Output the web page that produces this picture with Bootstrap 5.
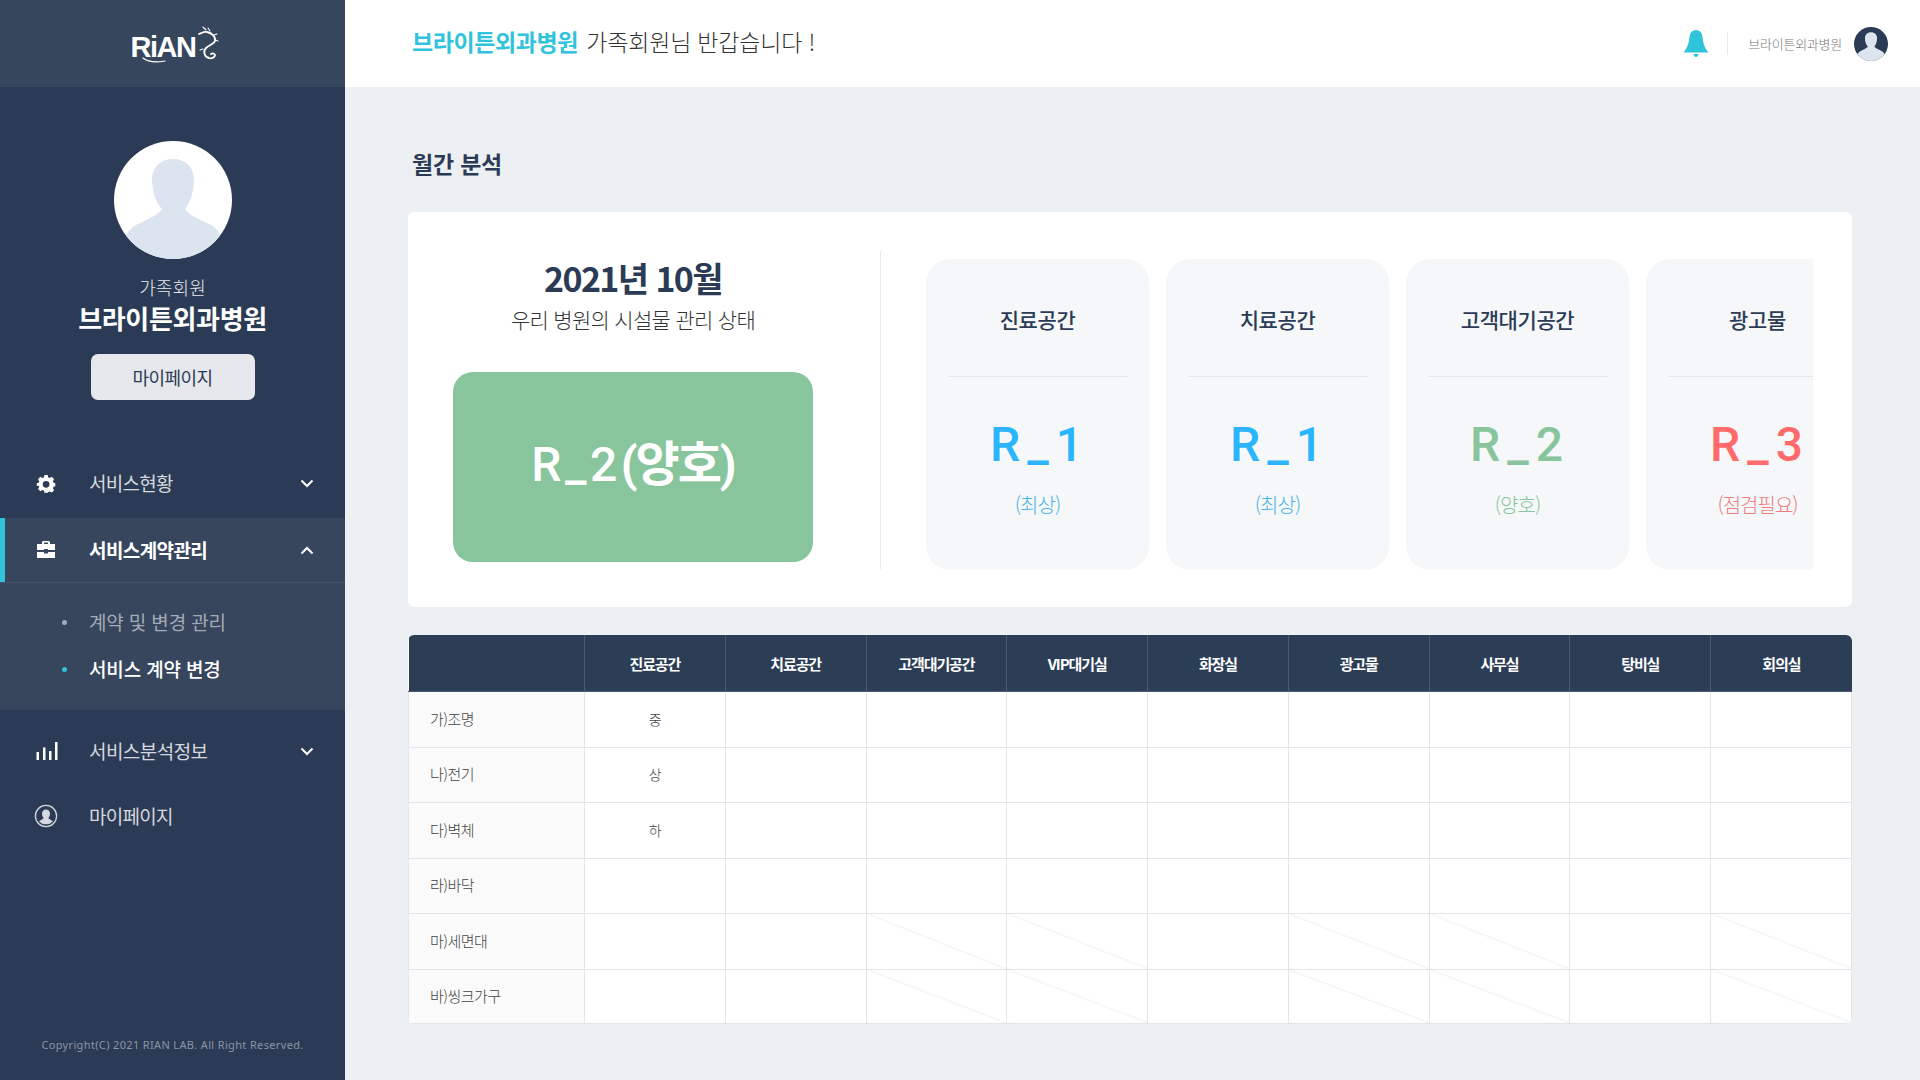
<!doctype html>
<html lang="ko"><head><meta charset="utf-8"><title>RIAN</title>
<link href="https://cdn.jsdelivr.net/npm/bootstrap@5.3.0/dist/css/bootstrap.min.css" rel="stylesheet">
<style>
html,body{height:100%;overflow:hidden}
body{font-family:"Noto Sans CJK KR","Noto Sans",sans-serif;background:#ecf0f3;color:#2c3b55}
.shell{height:1080px}
.side{width:345px;flex:0 0 345px;background:#2c3b55;color:#fff}
.brand{height:87px;background:#36465c;padding-top:2px}
.logo-wrap{position:relative;width:88px;height:40px;margin-left:4px}
.logo-word{font-family:"Liberation Sans",sans-serif;font-weight:700;font-size:29px;letter-spacing:-1.500px;line-height:40px;color:#fff;padding-top:2px;display:block}
.logo-swirl{position:absolute;left:0;top:0}
.prof{padding-top:54px}
.avatar-big{width:118px;height:118px;display:block}
.prof-role{font-size:18px;font-weight:300;letter-spacing:.1px;color:#e6e9ee;line-height:24px;margin-top:16px}
.prof-name{font-size:26px;font-weight:700;letter-spacing:-.35px;line-height:32px;margin-top:3px}
.prof-btn{width:164px;height:46px;background:#e6e8ed;border:0;border-radius:7px;font-size:18px;font-weight:400;letter-spacing:-.6px;color:#2c3b55;margin-top:20px;padding:0}
.menu{margin-top:51px}
.menu-row{height:66px;padding-left:34px;padding-right:31px;color:#d5d8de;font-size:19px;letter-spacing:-.7px;text-decoration:none}
.first-row{height:67px;padding-bottom:2px}
.menu-row.on{background:#37465d;color:#fff;font-weight:700;box-shadow:inset 5px 0 0 #2fc4dc;border-bottom:1px solid #445269;height:65px;letter-spacing:-.6px}
.ico{width:24px;height:24px;margin-right:31px;flex:none}
.chev{width:14px;height:9px;margin-left:auto;flex:none}
.sub-menu{background:#37465d;height:127px;padding-top:16px}
.sub-item{height:47px;padding-left:62px;font-size:19px;letter-spacing:-.15px;color:#a4abb7}
.sub-item.on{color:#fff;font-weight:500}
.dot{width:5px;height:5px;border-radius:50%;background:#a4abb7;margin-right:22px;flex:none}
.sub-item.on .dot{background:#2fc4dc}
.after-sub{margin-top:9px;height:64px;letter-spacing:-.55px}
.last-row{height:64px;margin-top:1px}
.copy{font-family:"Noto Sans",sans-serif;font-size:11px;color:#8a94a5;margin-top:auto;padding-bottom:27px;letter-spacing:.35px}
.main-col{flex:0 0 1575px;width:1575px}
.topbar{height:87px;background:#fff;padding:0 32px 0 67px}
.hello{font-size:23px;font-weight:300;letter-spacing:-.2px;color:#333;padding-bottom:5px}
.hello b{color:#2fc4dc;font-weight:700;letter-spacing:-.4px;margin-right:2px}
.vr-line{width:1px;height:23px;background:#e6e8eb;margin:0 20px 0 18px}
.top-name{font-size:13px;font-weight:300;letter-spacing:-.25px;color:#777;margin-right:12px}
.work{padding:0 68px 0 63px}
.page-title{font-size:23px;font-weight:700;letter-spacing:-.2px;margin:60px 0 0 4px;line-height:32px;height:65px}
.panel{background:#fff;border-radius:6px;padding:39px 39px 38px 45px;height:395px}
.sum{width:428px;flex:none;border-right:1px solid #e6e8eb;padding-right:67px;margin-right:45px}
.sum-date{font-size:34px;font-weight:700;letter-spacing:-1.6px;line-height:46px;margin-top:4px}
.sum-sub{font-size:21px;font-weight:300;letter-spacing:-.7px;line-height:30px;color:#333;margin-top:3px}
.grade-box{height:190px;background:#88c59c;border-radius:20px;color:#fff;font-family:Roboto,"Noto Sans CJK KR",sans-serif;font-size:48px;font-weight:500;margin-top:38px;padding-bottom:4px;white-space:pre}
.grade-code{letter-spacing:3.500px}
.grade-word{font-weight:700;letter-spacing:-2px}
.scroller{overflow:hidden;flex:1;padding-top:8px;height:319px;gap:17px}
.tile{flex:0 0 223px;height:311px;background:#f5f7f9;border-radius:24px;padding:0 22px;text-align:center}
.tile-name{height:118px;border-bottom:1px solid #e3e6e9;font-size:21px;font-weight:500;letter-spacing:-.4px;padding-top:44px;line-height:32px;color:#2c3b55}
.tile-val{font-family:Roboto,sans-serif;font-size:48px;font-weight:500;letter-spacing:7px;text-indent:5px;line-height:60px;margin-top:38px;white-space:nowrap}
.tile-sub{font-size:20px;font-weight:300;letter-spacing:-1px;line-height:30px;margin-top:15px;white-space:nowrap}
.c-blue{color:#2cb5ff}.c-green{color:#88c59c}.c-red{color:#ff6b6b}
.sub-blue{color:#4db4e6}.sub-red{color:#ee7d7d}
.grid-wrap{margin-top:28px;border-radius:6px;overflow:hidden;background:#fff}
.grid{table-layout:fixed;width:100%;margin:0;border-collapse:collapse}
.grid th{background:#2c3d56;color:#fff;height:56px;font-size:15px;font-weight:700;letter-spacing:-1.1px;text-align:center;vertical-align:middle;border:1px solid #4b5a70;border-top:0;padding:3px 0 0}
.grid th:first-child{border-left:0}.grid th:last-child{border-right:0}
.grid td{height:55px;border:1px solid #e3e5e8;padding:0;text-align:center;vertical-align:middle;font-size:14px;font-weight:300;color:#444;letter-spacing:-.5px;background:#fff}
.grid tr:nth-child(odd) td{height:56px}
.grid tbody tr:last-child td{height:54px}
.grid td:first-child{background:#fafafa;text-align:left;padding-left:21px;font-size:15px}
.grid td.x{background:linear-gradient(to top right,transparent calc(50% - .6px),#e4e6e9,transparent calc(50% + .6px))}
</style></head><body>
<div class="shell d-flex">
<aside class="side d-flex flex-column">
  <div class="brand d-flex align-items-center justify-content-center">
    <div class="logo-wrap">
      <span class="logo-word">RiAN</span>
      <svg class="logo-swirl" width="88" height="40" viewBox="0 0 88 40" fill="none" stroke="#fff" stroke-linecap="round">
        <path stroke-width="1.800" d="M68 9c3-1 5-3 8-2 5 1 9 5 8 9-1 3-6 4-9 7-3 3-2 9 3 10 3 1 6-1 6-3-1-2-3-2-4-1"/>
        <path stroke-width="1.100" d="M72 2l3 3M77 3l2 3M83 10l3-1M84 15l3 1M72 24l-3 1"/>
        <path stroke-width="1.200" d="M12 33c5 4 12 5 22 3"/>
      </svg>
    </div>
  </div>
  <div class="prof d-flex flex-column align-items-center">
    <svg class="avatar-big" viewBox="0 0 118 118"><defs><clipPath id="ca"><circle cx="59" cy="59" r="59"/></clipPath></defs><circle cx="59" cy="59" r="59" fill="#fff"/><path clip-path="url(#ca)" fill="#dce5ef" d="M38 38C38 26 47 18 59 18s21 8 21 20c0 13-4 24-9 30 2 4 14 11 24 15 5 2 9 6 11 11v24H12V94c3-5 7-9 12-11 10-4 22-11 24-15-6-6-10-17-10-30z"/></svg>
    <div class="prof-role">가족회원</div>
    <div class="prof-name">브라이튼외과병원</div>
    <button class="prof-btn" type="button">마이페이지</button>
  </div>
  <nav class="menu">
    <a class="menu-row first-row d-flex align-items-center" href="#">
      <svg class="ico" viewBox="0 0 24 24" fill="#fff"><path fill-rule="evenodd" d="M10 2h4l.6 2.8 1.8.8 2.4-1.5 2.8 2.8-1.5 2.4.8 1.8L23 11.6v3.8l-2.100.6-.8 1.8 1.500 2.400-2.800 2.600-2.400-1.400-1.800.700L14 23h-4l-.6-2.500-1.800-.7-2.400 1.400-2.800-2.600 1.500-2.400-.8-1.800L1 15.400v-3.800l2.100-.5.8-1.800-1.500-2.400 2.800-2.800 2.400 1.500 1.800-.8zM12 9a4 4 0 1 0 0 8 4 4 0 0 0 0-8z" transform="translate(2 1.400) scale(.84)"/></svg>
      <span>서비스현황</span>
      <svg class="chev" viewBox="0 0 14 9" fill="none" stroke="#fff" stroke-width="2"><path d="M1.500 1.500L7 7l5.500-5.500"/></svg>
    </a>
    <a class="menu-row on d-flex align-items-center" href="#">
      <svg class="ico" viewBox="0 0 24 24" fill="#fff"><path d="M9 3h6l1 1v2h5v6h-7v-1h-4v1H3V6h5V4zm1 1.500V6h4V4.500zM3 14h7v1.500h4V14h7v6H3z"/></svg>
      <span>서비스계약관리</span>
      <svg class="chev" viewBox="0 0 14 9" fill="none" stroke="#fff" stroke-width="2"><path d="M1.500 7.500L7 2l5.500 5.500"/></svg>
    </a>
    <div class="sub-menu">
      <div class="sub-item d-flex align-items-center"><i class="dot"></i>계약 및 변경 관리</div>
      <div class="sub-item on d-flex align-items-center"><i class="dot"></i>서비스 계약 변경</div>
    </div>
    <a class="menu-row after-sub d-flex align-items-center" href="#">
      <svg class="ico" viewBox="0 0 24 24" fill="#fff"><path d="M2.500 13h2.500v8H2.500zM9 8.500h2.500V21H9zM15 12h2.500v9H15zM21 3h2.500v18H21z"/></svg>
      <span>서비스분석정보</span>
      <svg class="chev" viewBox="0 0 14 9" fill="none" stroke="#fff" stroke-width="2"><path d="M1.500 1.500L7 7l5.500-5.500"/></svg>
    </a>
    <a class="menu-row last-row d-flex align-items-center" href="#">
      <svg class="ico" viewBox="0 0 24 24"><circle cx="12" cy="12" r="10.600" fill="none" stroke="#d5d8de" stroke-width="1.300"/><path fill="#d5d8de" d="M12 5.500c2.500 0 4 1.700 4 4 0 2-.8 3.500-1.700 4.500.4 1 3 1.800 4.700 3.500a10 10 0 0 1-14 0c1.700-1.700 4.300-2.500 4.700-3.500C8.800 13 8 11.500 8 9.500c0-2.300 1.500-4 4-4z"/></svg>
      <span>마이페이지</span>
    </a>
  </nav>
  <div class="copy text-center">Copyright(C) 2021 RIAN LAB. All Right Reserved.</div>
</aside>
<div class="main-col d-flex flex-column">
  <header class="topbar d-flex align-items-center">
    <div class="hello"><b>브라이튼외과병원</b> 가족회원님 반갑습니다 !</div>
    <div class="ms-auto d-flex align-items-center">
      <svg width="26" height="30" viewBox="0 0 26 30" fill="#2fc4dc"><path d="M13 1c4 0 6 3 6.500 7 .5 5 1.500 10 6 15.500H.5C5 18 6 13 6.500 8 7 4 9 1 13 1z"/><path d="M10.500 25h5c0 1.500-1 3-2.500 3s-2.500-1.500-2.500-3z"/></svg>
      <span class="vr-line"></span>
      <span class="top-name">브라이튼외과병원</span>
      <svg width="34" height="34" viewBox="0 0 118 118"><defs><clipPath id="cb"><circle cx="59" cy="59" r="59"/></clipPath></defs><circle cx="59" cy="59" r="59" fill="#2c3b55"/><path clip-path="url(#cb)" fill="#dce5ef" d="M38 38C38 26 47 18 59 18s21 8 21 20c0 13-4 24-9 30 2 4 14 11 24 15 5 2 9 6 11 11v24H12V94c3-5 7-9 12-11 10-4 22-11 24-15-6-6-10-17-10-30z"/></svg>
    </div>
  </header>
  <main class="work">
    <h1 class="page-title">월간 분석</h1>
    <section class="panel d-flex">
      <div class="sum text-center">
        <div class="sum-date">2021년 10월</div>
        <div class="sum-sub">우리 병원의 시설물 관리 상태</div>
        <div class="grade-box d-flex align-items-center justify-content-center"><span class="grade-code">R_2</span> <span class="grade-word">(양호)</span></div>
      </div>
      <div class="scroller d-flex">
        <div class="tile"><div class="tile-name">진료공간</div><div class="tile-val c-blue">R_1</div><div class="tile-sub sub-blue">(최상)</div></div>
        <div class="tile"><div class="tile-name">치료공간</div><div class="tile-val c-blue">R_1</div><div class="tile-sub sub-blue">(최상)</div></div>
        <div class="tile"><div class="tile-name">고객대기공간</div><div class="tile-val c-green">R_2</div><div class="tile-sub c-green">(양호)</div></div>
        <div class="tile"><div class="tile-name">광고물</div><div class="tile-val c-red">R_3</div><div class="tile-sub sub-red">(점검필요)</div></div>
      </div>
    </section>
    <div class="grid-wrap">
      <table class="grid">
        <colgroup><col style="width:176px"><col span="9"></colgroup>
        <thead><tr><th></th><th>진료공간</th><th>치료공간</th><th>고객대기공간</th><th>VIP대기실</th><th>화장실</th><th>광고물</th><th>사무실</th><th>탕비실</th><th>회의실</th></tr></thead>
        <tbody>
          <tr><td>가)조명</td><td>중</td><td></td><td></td><td></td><td></td><td></td><td></td><td></td><td></td></tr>
          <tr><td>나)전기</td><td>상</td><td></td><td></td><td></td><td></td><td></td><td></td><td></td><td></td></tr>
          <tr><td>다)벽체</td><td>하</td><td></td><td></td><td></td><td></td><td></td><td></td><td></td><td></td></tr>
          <tr><td>라)바닥</td><td></td><td></td><td></td><td></td><td></td><td></td><td></td><td></td><td></td></tr>
          <tr><td>마)세면대</td><td></td><td></td><td class="x"></td><td class="x"></td><td></td><td class="x"></td><td class="x"></td><td></td><td class="x"></td></tr>
          <tr><td>바)씽크가구</td><td></td><td></td><td class="x"></td><td class="x"></td><td></td><td class="x"></td><td class="x"></td><td></td><td class="x"></td></tr>
        </tbody>
      </table>
    </div>
  </main>
</div>
</div>
<script src="https://cdn.jsdelivr.net/npm/bootstrap@5.3.0/dist/js/bootstrap.bundle.min.js"></script>
</body></html>
